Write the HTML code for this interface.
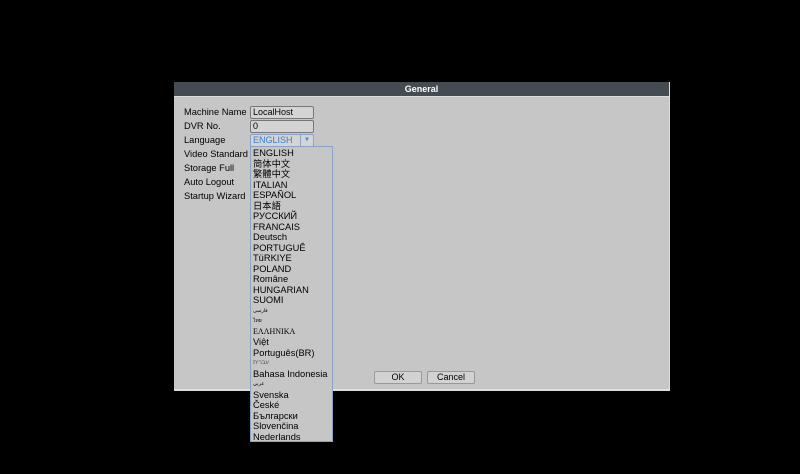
<!DOCTYPE html>
<html><head><meta charset="utf-8"><style>
body{margin:0;width:800px;height:474px;background:#000;overflow:hidden;position:relative;font-family:"Liberation Sans","Noto Sans CJK SC",sans-serif;}
#win{position:absolute;left:174px;top:82px;width:496px;height:309px;background:#c6c6c6;border-right:1px solid #ddd;border-bottom:2px solid #ddd;box-sizing:border-box}
#title{height:14px;background:#444b53;color:#fff;font-size:9px;font-weight:bold;text-align:center;line-height:15px;border-bottom:1px solid #ddd}
.lbl{position:absolute;left:10px;font-size:9.3px;color:#000}
.box{position:absolute;left:76px;width:60px;height:11px;border:1px solid #777;border-radius:2px;background:#d4d4d4;font-size:9px;line-height:11px;padding-left:2px;box-sizing:content-box;color:#000}
#list{position:absolute;left:250px;top:146px;width:83px;height:296px;background:#c6c6c6;border:1px solid #8aa4c8;box-sizing:border-box;padding-left:2px;padding-top:1px}
#list div{font-size:9.3px;height:10.5px;line-height:10.5px;color:#000;white-space:nowrap}
.btn{position:absolute;top:289px;width:46px;height:11px;border:1px solid #999;border-radius:2px;background:#d2d2d2;font-size:9px;text-align:center;line-height:11px;color:#000}
</style></head><body>
<div id="win"><div id="title">General</div>
<div class="lbl" style="top:25px">Machine Name</div>
<div class="lbl" style="top:39px">DVR No.</div>
<div class="lbl" style="top:53px">Language</div>
<div class="lbl" style="top:67px">Video Standard</div>
<div class="lbl" style="top:81px">Storage Full</div>
<div class="lbl" style="top:95px">Auto Logout</div>
<div class="lbl" style="top:109px">Startup Wizard</div>
<div class="box" style="top:24px">LocalHost</div>
<div class="box" style="top:38px">0</div>
<div class="box" style="top:52px;color:#3a7fd0;border-color:#8aa4c8">ENGLISH<span style="position:absolute;right:0;top:0;width:12px;height:11px;border-left:1px solid #8aa4c8;color:#3a7fd0;font-size:6px;text-align:center">▼</span></div>
<div class="btn" style="left:200px">OK</div>
<div class="btn" style="left:253px">Cancel</div>
</div>
<div id="list">
<div>ENGLISH</div><div>简体中文</div><div>繁體中文</div><div>ITALIAN</div><div>ESPAÑOL</div><div>日本語</div><div>РУССКИЙ</div><div>FRANCAIS</div><div>Deutsch</div><div>PORTUGUÊ</div><div>TüRKIYE</div><div>POLAND</div><div>Române</div><div>HUNGARIAN</div><div>SUOMI</div><div style="font-size:5px">فارسی</div><div style="font-size:5px">ไทย</div><div style="font-family:'Liberation Serif',serif;font-size:8px">ΕΛΛΗΝΙΚΑ</div><div>Việt</div><div>Português(BR)</div><div style="font-size:6px;color:#555">עברית</div><div>Bahasa Indonesia</div><div style="font-size:5px">عربي</div><div>Svenska</div><div>České</div><div>Български</div><div>Slovenčina</div><div>Nederlands</div>
</div>
</body></html>
